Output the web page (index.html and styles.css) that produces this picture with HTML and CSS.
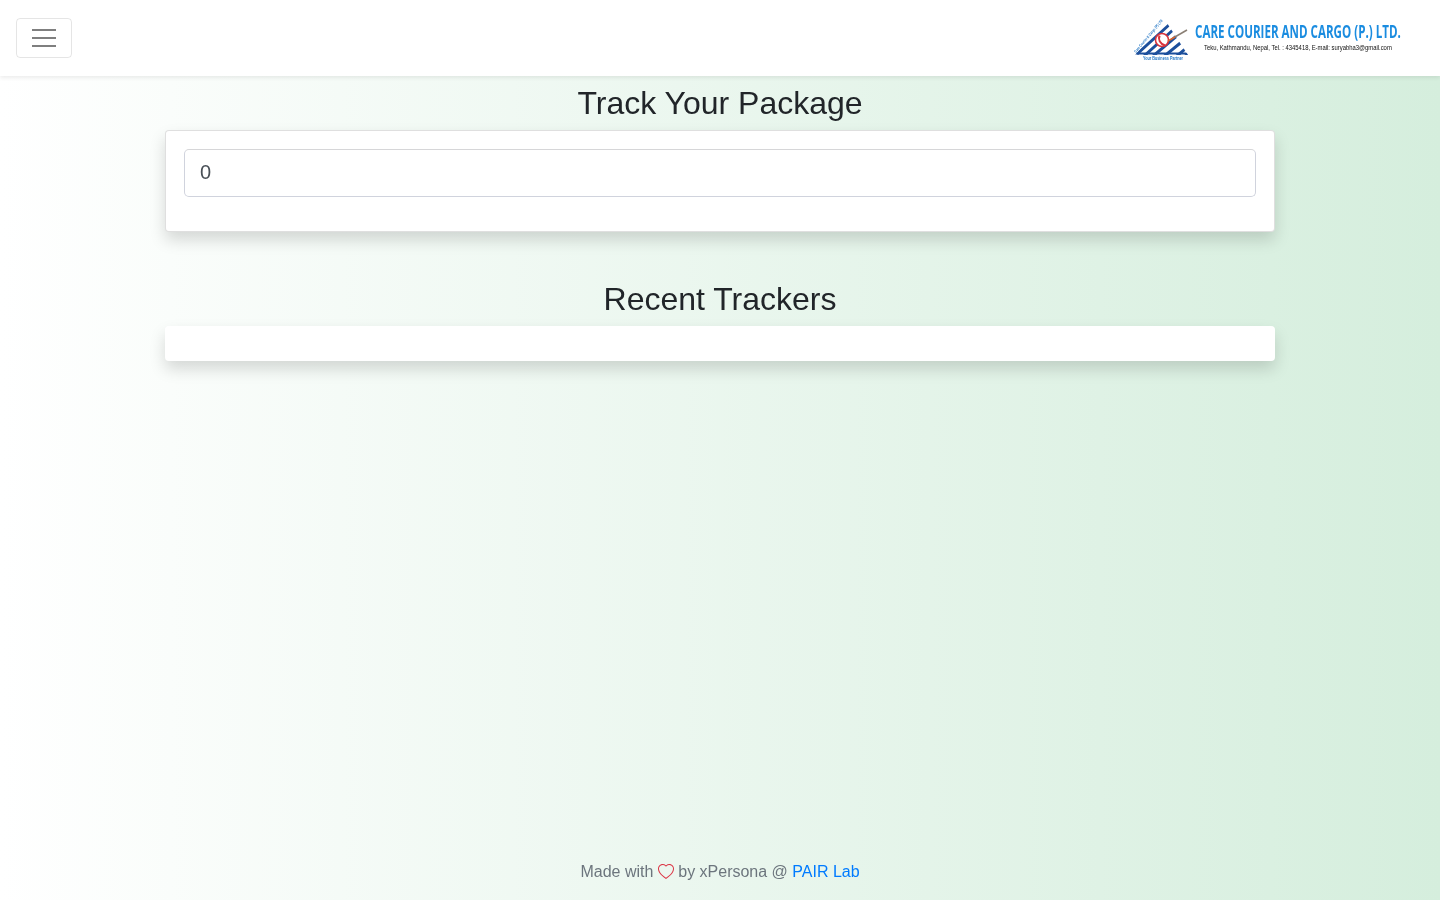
FILE: index.html
```html
<!DOCTYPE html>
<html lang="en">
<head>
<meta charset="utf-8">
<title>Track Your Package</title>
<link rel="stylesheet" href="styles.css">
</head>
<body>
<nav class="navbar">
  <button class="toggler" type="button" aria-label="Toggle navigation">
    <svg class="toggler-icon" viewBox="0 0 30 30" width="30" height="30"><path d="M3 7h24M3 15h24M3 23h24" stroke="rgba(0,0,0,.5)" stroke-width="2" fill="none"/></svg>
  </button>
  <svg class="logo" viewBox="0 0 300 60" width="300" height="60" role="img" aria-label="Care Courier and Cargo (P.) Ltd.">
    <defs><clipPath id="tri"><polygon points="11,47 41,12 64,47"/></clipPath></defs>
    <g clip-path="url(#tri)" stroke="#1c4f9c" stroke-width="3" fill="none">
      <path d="M13 46L46 16M20 48L50 21M28 49L55 26M38 50L60 32M48 52L66 37M56 52L72 40"/>
      <path d="M8 45.500H66" stroke-width="2"/>
    </g>
    <circle cx="38" cy="32" r="6.500" fill="#fff" stroke="#d8343c" stroke-width="1.600"/>
    <path d="M35.500 27.500c-1.500 4 .5 8 5.500 10" stroke="#d8343c" stroke-width="2.200" fill="none"/>
    <path d="M50 29.500L63 22" stroke="#8a7f74" stroke-width="1.500"/>
    <path d="M44 33l7-4" stroke="#d8642c" stroke-width="1.800"/>
    <g transform="translate(12 45) rotate(-50) scale(.75 1)"><text class="logo-arc" textLength="56" lengthAdjust="spacingAndGlyphs">Care Courier &amp; Cargo (P) LTD</text></g>
    <g transform="translate(19 51.500) scale(.8 1)"><text class="logo-tag" textLength="50" lengthAdjust="spacingAndGlyphs">Your Business Partner</text></g>
    <g transform="translate(71 30) scale(.62 1)"><text class="logo-name" textLength="332" lengthAdjust="spacingAndGlyphs">CARE COURIER AND CARGO (P.) LTD.</text></g>
    <g transform="translate(80 42) scale(.82 1)"><text class="logo-sub" textLength="229" lengthAdjust="spacingAndGlyphs">Teku, Kathmandu, Nepal, Tel. : 4345418, E-mail: suryabha3@gmail.com</text></g>
  </svg>
</nav>
<main class="container">
  <h2 class="title">Track Your Package</h2>
  <section class="card card-search">
    <input class="field" type="text" value="0" aria-label="Tracking number">
  </section>
  <h2 class="title title-recent">Recent Trackers</h2>
  <section class="card card-recent"></section>
</main>
<footer class="footer">
  Made with
  <svg class="heart" viewBox="0 0 16 16" width="16" height="16"><path d="m8 2.748-.717-.737C5.6.281 2.514.878 1.400 3.053c-.523 1.023-.641 2.500.314 4.385.92 1.815 2.834 3.989 6.286 6.357 3.452-2.368 5.365-4.542 6.286-6.357.955-1.886.838-3.362.314-4.385C13.486.878 10.400.28 8.717 2.010L8 2.748zM8 15C-7.333 4.868 3.279-3.040 7.824 1.143c.06.055.119.112.176.171a3.120 3.120 0 0 1 .176-.17C12.720-3.042 23.333 4.867 8 15z" fill="#dc3545"/></svg>
  by xPersona @ <a class="link" href="#">PAIR Lab</a>
</footer>
</body>
</html>
```

FILE: styles.css
```css
* { box-sizing: border-box; }
html, body { margin: 0; height: 100%; }
body {
  min-height: 100vh;
  display: flex;
  flex-direction: column;
  font-family: "Liberation Sans", Arial, sans-serif;
  font-size: 16px;
  line-height: 1.5;
  color: #212529;
  background: linear-gradient(to right, #fff, #d5eedd);
}
.navbar {
  flex: none;
  height: 76px;
  padding: 8px 16px;
  display: flex;
  align-items: center;
  justify-content: space-between;
  background: #fff;
  box-shadow: 0 2px 4px rgba(0, 0, 0, .075);
}
.toggler {
  width: 56px;
  height: 40px;
  padding: 0;
  display: flex;
  align-items: center;
  justify-content: center;
  background: transparent;
  border: 1px solid rgba(0, 0, 0, .1);
  border-radius: 4px;
}
.toggler-icon { display: block; }
.logo { display: block; overflow: visible; filter: blur(.45px); }
.logo-name { font: 700 18px "Open Sans", sans-serif; fill: #1a8ce0; }
.logo-sub { font: 400 7px "Liberation Sans", sans-serif; fill: #111; }
.logo-tag { font: 700 4.5px "Liberation Sans", sans-serif; fill: #1f74c4; }
.logo-arc { font: 700 4px "Liberation Sans", sans-serif; fill: #1f74c4; }
.container {
  width: 1110px;
  margin: 0 auto;
  padding-top: 8px;
  will-change: opacity;
}
.title {
  margin: 0 0 8px;
  font-size: 32px;
  font-weight: 500;
  line-height: 1.2;
  text-align: center;
}
.title-recent { margin-top: 48px; }
.card {
  background: #fff;
  border-radius: 4px;
  box-shadow: 0 8px 16px rgba(0, 0, 0, .15);
}
.card-search {
  height: 101.6px;
  padding: 18px;
  border: 1px solid rgba(0, 0, 0, .125);
}
.card-recent { height: 35px; }
.field {
  display: block;
  width: 100%;
  height: 48px;
  padding: 7px 15px 9px;
  font: 20px/1.5 "Liberation Sans", Arial, sans-serif;
  color: #495057;
  background: #fff;
  border: 1px solid #d0d3dd;
  border-top-color: #d6d6d8;
  border-radius: 5px;
  outline: none;
}
.footer {
  margin-top: auto;
  padding-bottom: 16px;
  text-align: center;
  color: #6c757d;
  will-change: opacity;
}
.heart { vertical-align: -3px; }
.link { color: #007bff; text-decoration: none; }
```
